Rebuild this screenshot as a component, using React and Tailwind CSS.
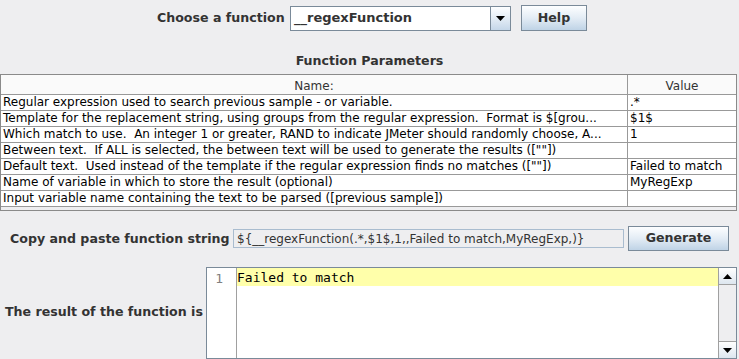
import React from "react";

const rows = [
  ["Regular expression used to search previous sample - or variable.", ".*"],
  ["Template for the replacement string, using groups from the regular expression.  Format is $[grou...", "$1$"],
  ["Which match to use.  An integer 1 or greater, RAND to indicate JMeter should randomly choose, A...", "1"],
  ["Between text.  If ALL is selected, the between text will be used to generate the results ([\"\"])", ""],
  ["Default text.  Used instead of the template if the regular expression finds no matches ([\"\"])", "Failed to match"],
  ["Name of variable in which to store the result (optional)", "MyRegExp"],
  ["Input variable name containing the text to be parsed ([previous sample])", ""],
];

function MetalButton({ children, className = "" }) {
  return (
    <div
      className={
        "flex items-center justify-center border border-[#7a8a99] bg-gradient-to-b from-[#fdfeff] via-[#e3ecf5] to-[#bfd3e6] text-[12.6px] font-bold text-[#333333] " +
        className
      }
    >
      {children}
    </div>
  );
}

export default function App() {
  return (
    <div className="w-[739px] h-[359px] overflow-hidden bg-[#eeeef0] font-['DejaVu_Sans',sans-serif] text-[12px] text-black flex flex-col">
      {/* Top row */}
      <div className="h-[37px] flex items-center pl-[157px]">
        <span className="w-[133px] font-bold text-[12.6px] text-[#333333] leading-[14px]">Choose a function</span>
        <div className="w-[221px] h-[25px] border border-[#7a8a99] bg-white flex">
          <div className="flex-1 flex items-center pl-[3px] text-[13px] font-bold text-[#333333]">__regexFunction</div>
          <div className="w-[20px] h-full border-l border-[#7a8a99] bg-gradient-to-b from-[#fdfeff] via-[#e3ecf5] to-[#c5d7e9] flex items-center justify-center">
            <svg width="9" height="5" viewBox="0 0 9 5"><path d="M0 0H9L4.5 5Z" fill="#000" /></svg>
          </div>
        </div>
        <MetalButton className="ml-[10px] w-[66px] h-[26px]">Help</MetalButton>
      </div>

      {/* Title */}
      <div className="h-[38px] flex items-end justify-center pb-[6px]">
        <span className="font-bold text-[12.6px] text-[#333333] leading-[14px]">Function Parameters</span>
      </div>

      {/* Table */}
      <div className="w-[737px] h-[139px] border border-[#8a8a8a] bg-[#eeeef0] flex flex-col">
        <div className="h-[20px] flex border-b border-[#999999] bg-[#fafafa] text-[#333333]">
          <div className="w-[627px] border-r border-[#999999] flex items-center justify-center pt-[2px]">Name:</div>
          <div className="flex-1 flex items-center justify-center pt-[2px]">Value</div>
        </div>
        {rows.map(([n, v], i) => (
          <div key={i} className="h-[16px] flex border-b border-[#999999] bg-white">
            <div className="w-[627px] border-r border-[#999999] px-[2px] leading-[15px] whitespace-pre overflow-hidden">{n}</div>
            <div className="flex-1 px-[2px] leading-[15px] whitespace-pre overflow-hidden">{v}</div>
          </div>
        ))}
      </div>

      {/* Copy row */}
      <div className="mt-[15px] h-[25px] flex items-center pl-[10px]">
        <span className="w-[223px] font-bold text-[12.6px] text-[#333333] leading-[14px]">Copy and paste function string</span>
        <div className="w-[391px] h-[19px] border border-[#a9bccf] flex items-center pl-[3px] text-[#333333] whitespace-pre">
          {"${__regexFunction(.*,$1$,1,,Failed to match,MyRegExp,)}"}
        </div>
        <MetalButton className="ml-[4px] w-[101px] h-[25px]">Generate</MetalButton>
      </div>

      {/* Result row */}
      <div className="mt-[16px] flex-1 flex pl-[5px]">
        <div className="w-[201px] flex items-center pb-[2px]">
          <span className="font-bold text-[12.6px] text-[#333333] leading-[14px]">The result of the function is</span>
        </div>
        <div className="w-[531px] h-[92px] border border-[#7a8a99] bg-white flex">
          <div className="w-[30px] border-r border-[#a0a0a0] flex justify-end pr-[13px] pt-[2px] font-['DejaVu_Sans_Mono',monospace] text-[13px] leading-[17px] text-[#808080]">1</div>
          <div className="flex-1 flex flex-col">
            <div className="h-[18px] bg-[#ffffaa] pt-[2px] font-['DejaVu_Sans_Mono',monospace] text-[13px] leading-[16px] text-[#000000]">Failed to match</div>
          </div>
          <div className="w-[18px] border-l border-[#a0a0a0] bg-[#eeeef0] flex flex-col justify-between">
            <div className="h-[17px] border-b border-[#a0a0a0] bg-gradient-to-b from-white to-[#dde6ef] flex items-center justify-center">
              <svg width="9" height="5" viewBox="0 0 9 5"><path d="M0 5H9L4.5 0Z" fill="#000" /></svg>
            </div>
            <div className="h-[17px] border-t border-[#a0a0a0] bg-gradient-to-b from-white to-[#dde6ef] flex items-center justify-center">
              <svg width="9" height="5" viewBox="0 0 9 5"><path d="M0 0H9L4.5 5Z" fill="#000" /></svg>
            </div>
          </div>
        </div>
      </div>
    </div>
  );
}
